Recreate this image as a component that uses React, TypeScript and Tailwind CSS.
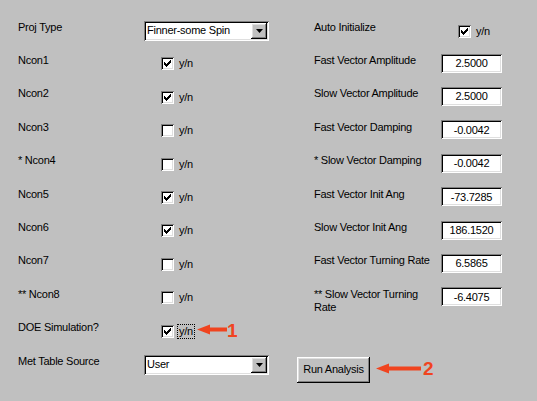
import React from 'react';

const sunken =
  'shadow-[inset_1px_1px_0_#808080,inset_-1px_-1px_0_#ffffff,inset_2px_2px_0_#000000,inset_-2px_-2px_0_#dfdfdf]';
const raised =
  'shadow-[inset_-1px_-1px_0_#000000,inset_1px_1px_0_#ffffff,inset_-2px_-2px_0_#808080,inset_2px_2px_0_#dfdfdf]';

function CheckBox({ checked }: { checked: boolean }) {
  return (
    <div className={`w-[13px] h-[13px] bg-white shrink-0 flex items-center justify-center ${sunken}`}>
      {checked && (
        <svg width="7" height="7" viewBox="0 0 7 7" shapeRendering="crispEdges">
          <path d="M0 2h1v3h-1zM1 3h1v3h-1zM2 4h1v3h-1zM3 3h1v3h-1zM4 2h1v3h-1zM5 1h1v3h-1zM6 0h1v3h-1z" fill="#000" />
        </svg>
      )}
    </div>
  );
}

function YesNo({ checked, focus = false }: { checked: boolean; focus?: boolean }) {
  return (
    <div className="flex items-start">
      <CheckBox checked={checked} />
      {focus ? (
        <span className="ml-[3px] -mt-[1px] px-[1px] border border-dotted border-black">y/n</span>
      ) : (
        <span className="ml-[5px]">y/n</span>
      )}
    </div>
  );
}

function Select({ value }: { value: string }) {
  return (
    <div className={`w-[125px] h-[20px] bg-white flex items-center p-[2px] ${sunken}`}>
      <span className="flex-1 pl-[1px] whitespace-nowrap overflow-hidden">{value}</span>
      <div className={`w-[16px] h-[16px] bg-[#c0c0c0] flex items-center justify-center ${raised}`}>
        <svg width="7" height="4" viewBox="0 0 7 4">
          <path d="M0 0h7L3.5 4z" fill="#000" />
        </svg>
      </div>
    </div>
  );
}

function TextBox({ value }: { value: string }) {
  return (
    <div className={`w-[61px] h-[19px] bg-white flex items-center justify-center pt-[1px] ${sunken}`}>
      {value}
    </div>
  );
}

const leftRows: { label: string; select?: string; checked?: boolean; focus?: boolean }[] = [
  { label: 'Proj Type', select: 'Finner-some Spin' },
  { label: 'Ncon1', checked: true },
  { label: 'Ncon2', checked: true },
  { label: 'Ncon3', checked: false },
  { label: '* Ncon4', checked: false },
  { label: 'Ncon5', checked: true },
  { label: 'Ncon6', checked: true },
  { label: 'Ncon7', checked: false },
  { label: '** Ncon8', checked: false },
  { label: 'DOE Simulation?', checked: true, focus: true },
  { label: 'Met Table Source', select: 'User' },
];

const rightRows: { label: React.ReactNode; value: string }[] = [
  { label: 'Fast Vector Amplitude', value: '2.5000' },
  { label: 'Slow Vector Amplitude', value: '2.5000' },
  { label: 'Fast Vector Damping', value: '-0.0042' },
  { label: '* Slow Vector Damping', value: '-0.0042' },
  { label: 'Fast Vector Init Ang', value: '-73.7285' },
  { label: 'Slow Vector Init Ang', value: '186.1520' },
  { label: 'Fast Vector Turning Rate', value: '6.5865' },
  { label: <>** Slow Vector Turning<br />Rate</>, value: '-6.4075' },
];

// annotation arrow pointing left
function Arrow({ width }: { width: number }) {
  return (
    <svg width={width} height="11" viewBox={`0 0 ${width} 11`}>
      <path d={`M0 5.5L13 0.5V3.5H${width}V7.5H13V10.5z`} fill="#f0441f" />
    </svg>
  );
}

export default function App() {
  return (
    <div className="relative w-[537px] h-[401px] overflow-hidden bg-[#c0c0c0] text-black font-['Liberation_Sans',Arial,sans-serif] text-[11px] leading-[13px] tracking-[-0.25px]">
      <div className="flex pt-[20.7px]">
        {/* Left column */}
        <div className="w-[297px] shrink-0 pl-[18px] flex flex-col">
          {leftRows.map((r, i) => (
            <div key={i} className="h-[33.4px] flex items-start">
              <div className="w-[126px] shrink-0 whitespace-nowrap">{r.label}</div>
              {r.select !== undefined ? (
                <Select value={r.select} />
              ) : (
                <div className="ml-[17px] mt-[3.3px]">
                  <YesNo checked={!!r.checked} focus={r.focus} />
                </div>
              )}
            </div>
          ))}
        </div>

        {/* Right column */}
        <div className="flex-1 flex flex-col">
          <div className="h-[33.4px] flex items-start">
            <div className="w-[144px] shrink-0 pl-[17px]">Auto Initialize</div>
            <div className="ml-[17px] mt-[4.3px]">
              <YesNo checked />
            </div>
          </div>
          {rightRows.map((r, i) => (
            <div key={i} className="h-[33.4px] flex items-start">
              <div className="w-[144px] shrink-0 pl-[17px] whitespace-nowrap">{r.label}</div>
              <div className="-mt-[0.5px]">
                <TextBox value={r.value} />
              </div>
            </div>
          ))}
          <div className="h-[33.4px]" />
          <div className="h-[33.4px] flex items-start">
            <button className={`mt-[2.3px] w-[73px] h-[26px] bg-[#c0c0c0] flex items-center justify-center pb-[1px] ${raised}`}>
              Run Analysis
            </button>
          </div>
        </div>
      </div>

      {/* Annotations */}
      <div className="absolute left-[197px] top-[323.5px]">
        <Arrow width={30} />
      </div>
      <div className="absolute left-[227px] top-[321px] text-[19px] leading-[19px] font-bold tracking-normal text-[#f0441f]">1</div>
      <div className="absolute left-[376px] top-[362.5px]">
        <Arrow width={45} />
      </div>
      <div className="absolute left-[423px] top-[359px] text-[19px] leading-[19px] font-bold tracking-normal text-[#f0441f]">2</div>
    </div>
  );
}
